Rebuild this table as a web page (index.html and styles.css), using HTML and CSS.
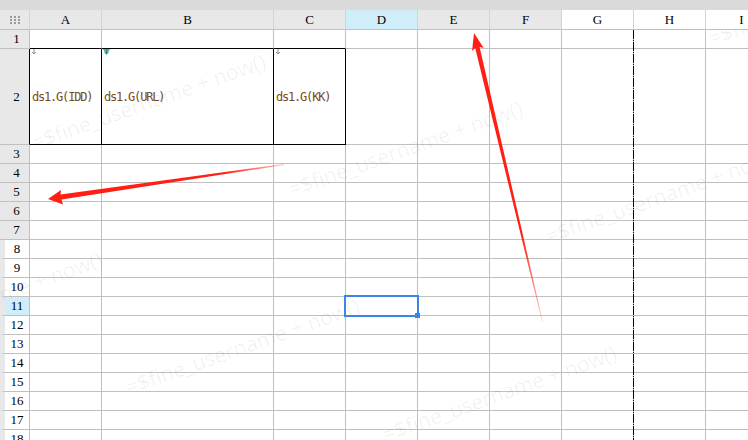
FILE: index.html
```html
<!DOCTYPE html>
<html lang="en">
<head>
  <meta charset="UTF-8" />
  <title>Sheet</title>
  <link rel="stylesheet" href="styles.css">
</head>
<body>

  <div class="topbar"></div>

  <div class="sheet">
    <div class="row head">
      <div class="corner">
        <svg width="10" height="8" viewBox="0 0 10 8">
          <g fill="#9a9a9a">
            <rect x="0" y="0" width="2" height="2"/><rect x="4" y="0" width="2" height="2"/><rect x="8" y="0" width="2" height="2"/>
            <rect x="0" y="3" width="2" height="2"/><rect x="4" y="3" width="2" height="2"/><rect x="8" y="3" width="2" height="2"/>
            <rect x="0" y="6" width="2" height="2"/><rect x="4" y="6" width="2" height="2"/><rect x="8" y="6" width="2" height="2"/>
          </g>
        </svg>
      </div>
      <div>A</div><div>B</div><div>C</div><div class="cur">D</div><div>E</div><div>F</div>
      <div class="out">G</div><div class="out">H</div><div class="out">I</div>
    </div>

    <div class="row"><div class="rh">1</div><div class="bb"></div><div class="bb"></div><div class="bb"></div><div></div><div></div><div></div><div></div><div></div><div></div></div>

    <div class="row tall">
      <div class="rh br">2</div>
      <div class="box expr">
        <svg class="flag" width="6" height="6" viewBox="0 0 6 6"><path d="M3 0V5M1 3L3 5L5 3" stroke="#8c8c8c" fill="none"/></svg>
        ds1.G(IDD)
      </div>
      <div class="box expr">
        <svg class="flag" width="7" height="7" viewBox="0 0 7 7"><path d="M0 0H7L3.5 6Z" fill="#2cc4b2"/><path d="M3.5 0V5M1.5 3L3.5 5L5.5 3" stroke="#5a7a78" fill="none"/></svg>
        ds1.G(URL)
      </div>
      <div class="box expr">
        <svg class="flag" width="6" height="6" viewBox="0 0 6 6"><path d="M3 0V5M1 3L3 5L5 3" stroke="#8c8c8c" fill="none"/></svg>
        ds1.G(KK)
      </div>
      <div></div><div></div><div></div><div></div><div></div><div></div>
    </div>

    <div class="row"><div class="rh">3</div><div></div><div></div><div></div><div></div><div></div><div></div><div></div><div></div><div></div></div>
    <div class="row"><div class="rh">4</div><div></div><div></div><div></div><div></div><div></div><div></div><div></div><div></div><div></div></div>
    <div class="row"><div class="rh">5</div><div></div><div></div><div></div><div></div><div></div><div></div><div></div><div></div><div></div></div>
    <div class="row"><div class="rh">6</div><div></div><div></div><div></div><div></div><div></div><div></div><div></div><div></div><div></div></div>
    <div class="row"><div class="rh">7</div><div></div><div></div><div></div><div></div><div></div><div></div><div></div><div></div><div></div></div>
    <div class="row"><div class="rh out">8</div><div></div><div></div><div></div><div></div><div></div><div></div><div></div><div></div><div></div></div>
    <div class="row"><div class="rh out">9</div><div></div><div></div><div></div><div></div><div></div><div></div><div></div><div></div><div></div></div>
    <div class="row"><div class="rh out">10</div><div></div><div></div><div></div><div></div><div></div><div></div><div></div><div></div><div></div></div>
    <div class="row"><div class="rh cur">11</div><div></div><div></div><div></div><div class="sel"></div><div></div><div></div><div></div><div></div><div></div></div>
    <div class="row"><div class="rh out">12</div><div></div><div></div><div></div><div></div><div></div><div></div><div></div><div></div><div></div></div>
    <div class="row"><div class="rh out">13</div><div></div><div></div><div></div><div></div><div></div><div></div><div></div><div></div><div></div></div>
    <div class="row"><div class="rh out">14</div><div></div><div></div><div></div><div></div><div></div><div></div><div></div><div></div><div></div></div>
    <div class="row"><div class="rh out">15</div><div></div><div></div><div></div><div></div><div></div><div></div><div></div><div></div><div></div></div>
    <div class="row"><div class="rh out">16</div><div></div><div></div><div></div><div></div><div></div><div></div><div></div><div></div><div></div></div>
    <div class="row"><div class="rh out">17</div><div></div><div></div><div></div><div></div><div></div><div></div><div></div><div></div><div></div></div>
    <div class="row"><div class="rh out">18</div><div></div><div></div><div></div><div></div><div></div><div></div><div></div><div></div><div></div></div>
  </div>

  <!-- watermark -->
  <div class="wm">
    <span class="w1">=$fine_username + now()</span>
    <span class="w2">=$fine_username + now()</span>
    <span class="w3">=$fine_username + now()</span>
    <span class="w4">=$fine_username + now()</span>
    <span class="w5">=$fine_username + now()</span>
    <span class="w6">=$fine_username + now()</span>
    <span class="w7">=$fine_username + now()</span>
    <span class="w8">=$fine_username + now()</span>
  </div>

  <!-- page break line and annotation arrows -->
  <svg class="marks" width="748" height="440" viewBox="0 0 748 440">
    <defs>
      <linearGradient id="fade1" gradientUnits="userSpaceOnUse" x1="48" y1="0" x2="284" y2="0">
        <stop offset="0" stop-color="#ff1f14"/>
        <stop offset="0.75" stop-color="#ff1f14"/>
        <stop offset="1" stop-color="#ff1f14" stop-opacity="0.25"/>
      </linearGradient>
      <linearGradient id="fade2" gradientUnits="userSpaceOnUse" x1="0" y1="33" x2="0" y2="322">
        <stop offset="0" stop-color="#ff1f14"/>
        <stop offset="0.7" stop-color="#ff1f14"/>
        <stop offset="1" stop-color="#ff1f14" stop-opacity="0.15"/>
      </linearGradient>
    </defs>
    <line x1="633.5" y1="30" x2="633.5" y2="440" stroke="#000" stroke-dasharray="9 1 1 1"/>
    <polygon fill="url(#fade1)" points="48,199 61,190 60.5,194.5 284,164 284,165 61.5,199.5 63,204.5"/>
    <polygon fill="url(#fade2)" points="474,33 483.7,48.1 479.6,47.1 543,322 542,322 475.2,48.1 472.1,50.9"/>
  </svg>

</body>
</html>
```

FILE: styles.css
```css
:root {
  --grid: #c0c0c0;
  --head: #e8e8e8;
  --pick: #cfeefa;
  --blue: #3a86e6;
}

body {
  margin: 0;
  width: 748px;
  height: 440px;
  overflow: hidden;
  position: relative;
  background: #fff;
  color: #000;
  font-family: "Liberation Serif", serif;
}

.topbar {
  height: 10px;
  background: #dadada;
}

.row {
  display: grid;
  grid-template-columns: 30px 72px 172px repeat(7, 72px);
  height: 19px;
}

.row > div {
  box-sizing: border-box;
  position: relative;
  border-right: 1px solid var(--grid);
  border-bottom: 1px solid var(--grid);
}

.head {
  height: 20px;
}

.head > div {
  display: flex;
  align-items: center;
  justify-content: center;
  background: var(--head);
  border-right-color: #d4d4d4;
  font-size: 13px;
}

.head .cur {
  background: var(--pick);
}

.head .out {
  background: #fff;
}

.rh {
  display: flex;
  align-items: center;
  justify-content: center;
  padding-left: 4px;
  background: var(--head);
  font-size: 13px;
}

.row .rh.out,
.row .rh.cur {
  padding-left: 0;
  border-left: 5px solid var(--head);
  background: #fff;
}

.row .rh.cur {
  background: var(--pick);
}

.tall {
  height: 96px;
}

.row > .bb {
  border-bottom-color: #000;
}

.row > .br {
  border-right-color: #000;
}

.row > .box {
  border-right-color: #000;
  border-bottom-color: #000;
}

.expr {
  display: flex;
  align-items: center;
  padding-left: 2px;
  padding-top: 1px;
  font-family: "DejaVu Sans Mono", monospace;
  font-size: 12px;
  letter-spacing: -1.2px;
  color: #7a4a12;
  white-space: nowrap;
}

.flag {
  position: absolute;
  left: 1px;
  top: 0;
}

.sel::after {
  content: "";
  position: absolute;
  left: -2px;
  top: -2px;
  width: 75px;
  height: 22px;
  box-sizing: border-box;
  border: 2px solid var(--blue);
  z-index: 2;
}

.sel::before {
  content: "";
  position: absolute;
  left: 69px;
  top: 16px;
  width: 5px;
  height: 5px;
  background: var(--blue);
  z-index: 3;
}

.wm {
  position: absolute;
  left: 0;
  top: 30px;
  width: 748px;
  height: 410px;
  overflow: hidden;
  pointer-events: none;
}

.wm span {
  position: absolute;
  font-family: "Open Sans", sans-serif;
  font-size: 21px;
  line-height: 1;
  white-space: nowrap;
  color: rgba(0, 0, 0, 0.06);
  transform: rotate(-19.5deg);
  transform-origin: 0 18px;
}

/* baseline start points, minus 30px for the header and 18px for the ascent */
.w1 { left: 35px;   top: 102px; }
.w2 { left: 292px;  top: 149px; }
.w3 { left: 549px;  top: 196px; }
.w4 { left: 712px;  top: -2px; }
.w5 { left: -128px; top: 300px; }
.w6 { left: 129px;  top: 347px; }
.w7 { left: 386px;  top: 394px; }
.w8 { left: 643px;  top: 441px; }

.marks {
  position: absolute;
  left: 0;
  top: 0;
  pointer-events: none;
}
```
